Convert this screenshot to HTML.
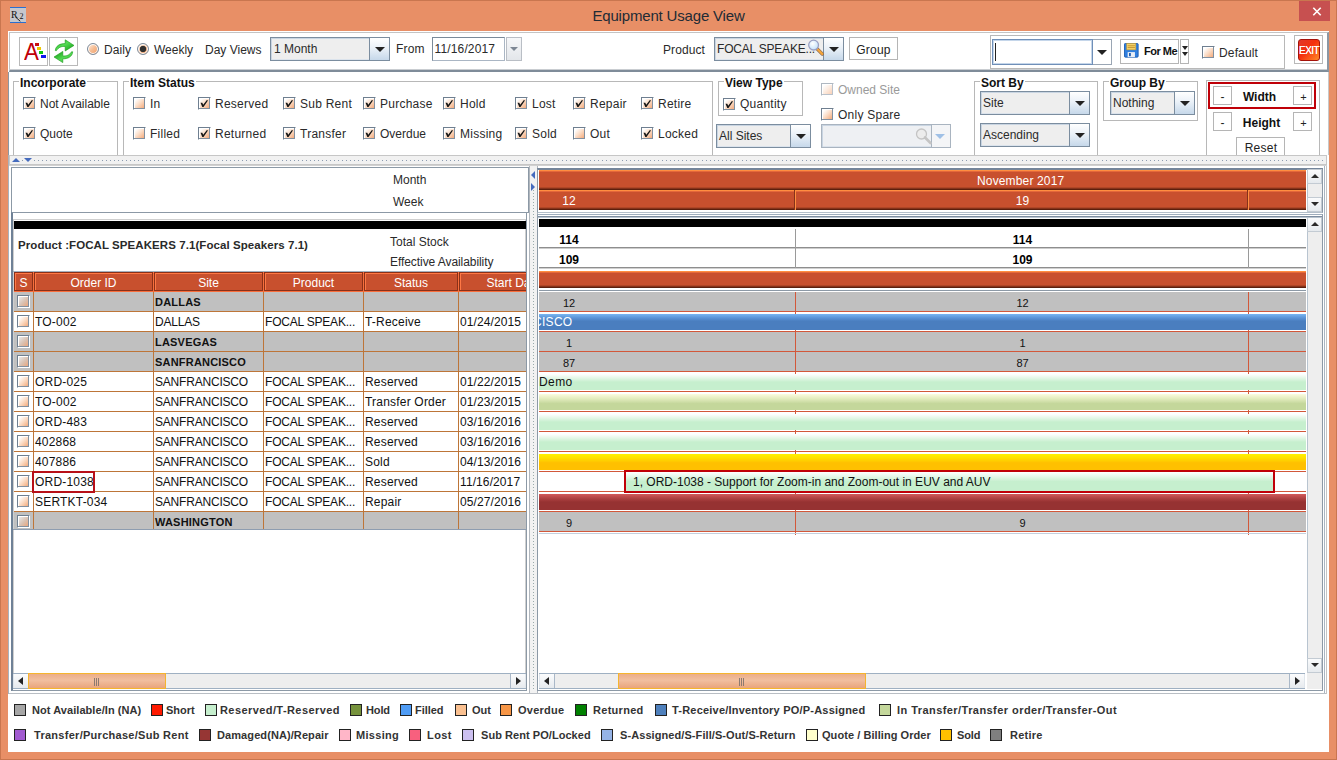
<!DOCTYPE html>
<html>
<head>
<meta charset="utf-8">
<title>Equipment Usage View</title>
<style>
html,body{margin:0;padding:0;}
body{width:1337px;height:760px;overflow:hidden;background:#E88F66;position:relative;font-family:"Liberation Sans",Arial,sans-serif;font-size:12px;color:#222;}
.a{position:absolute;box-sizing:border-box;}
.t{position:absolute;white-space:nowrap;line-height:14px;font-size:12px;color:#2a2a2a;}
.b{font-weight:bold;color:#111;}
.w{background:#fff;}
/* checkbox */
.cb{position:absolute;box-sizing:border-box;width:13px;height:13px;border:1px solid;border-color:#6f7f90 #fff #fff #6f7f90;background:linear-gradient(135deg,#ffffff 15%,#fbdcc6 50%,#f2a06c 100%);box-shadow:inset -1px -1px 0 #8190a0,inset 1px 1px 0 #fff;}
.cb.on::after{content:"";position:absolute;left:2px;top:1px;width:8px;height:8px;}
.cb svg{position:absolute;left:0;top:0;}
/* combo */
.combo{position:absolute;box-sizing:border-box;border:1px solid #7b8d9f;background:#eeeeee;box-shadow:inset 1px 1px 0 #c9d5e2,inset -1px -1px 0 #dbe3ec;}
.combo .ar{position:absolute;right:0;top:0;bottom:0;width:18px;background:linear-gradient(#ffffff 0%,#eaf1f8 45%,#c6d8ea 100%);border-left:1px solid #7b8d9f;}
.combo .ar::after{content:"";position:absolute;left:50%;margin-left:-5px;top:50%;margin-top:-2px;border-left:5px solid transparent;border-right:5px solid transparent;border-top:5px solid #222;}
.grp{position:absolute;box-sizing:border-box;border:1px solid #b8b8b8;}
.grp>span{position:absolute;top:-6px;left:5px;background:#fff;padding:0 1px;font-weight:bold;font-size:12px;line-height:14px;color:#111;white-space:nowrap;}
.btn{position:absolute;box-sizing:border-box;border:1px solid #b5b5b5;background:#fff;text-align:center;font-size:12px;line-height:14px;color:#222;}

.hd{background:#c8502e;color:#fff;text-align:center;font-size:12px;line-height:14px;padding-top:3px;border:1px solid #8a3018;white-space:nowrap;overflow:hidden;box-shadow:inset 1px 1px 0 #ff7845;}
.row{left:0;width:560px;height:20px;background:#fff;border-bottom:1px solid #bd7538;}
.row.g{background:#c0c0c0;}
.row .c{position:absolute;top:0;height:19px;box-sizing:border-box;margin-left:-1px;border-left:1px solid #bd7538;padding:3px 0 0 1px;font-size:12px;line-height:14px;color:#111;white-space:nowrap;overflow:hidden;}
.row .u{letter-spacing:-0.2px;}
.row .o{letter-spacing:0.2px;}
.row .d{letter-spacing:0.1px;}
.row .gb{font-weight:bold;font-size:11px;letter-spacing:0.2px;}
.ob{background:linear-gradient(#ff8e40 0,#ff8e40 1px,#e4683a 1px,#e4683a 2px,#c8502e 2px,#c8502e calc(100% - 3px),#b04626 calc(100% - 3px),#b04626 calc(100% - 2px),#86321a calc(100% - 2px),#86321a calc(100% - 1px),#5c200e calc(100% - 1px),#5c200e 100%);border-left:1px solid #ff8e40;border-right:1px solid #86321a;}
.lg{font-weight:bold;font-size:11px;color:#333;}
</style>
</head>
<body>
<!-- window chrome -->
<div class="a" style="left:0;top:0;width:1337px;height:760px;border:1px solid #c9764f;"></div>
<div class="t" style="left:0;width:1337px;top:7px;text-align:center;font-size:15px;line-height:18px;color:#222b35;letter-spacing:-0.17px;">Equipment Usage View</div>
<div class="a" id="appicon" style="left:10px;top:7px;width:16px;height:16px;background:#c6c7cc;border-top:1px solid #2a6fd0;border-bottom:1px solid #2a6fd0;"><span class="t" style="left:1px;top:2px;font-family:'Liberation Serif',serif;font-size:10px;line-height:10px;color:#111;">R</span><span class="t" style="left:9.500px;top:4px;font-family:'Liberation Serif',serif;font-size:8px;line-height:9px;color:#111;">2</span><svg class="a" style="left:0;top:0" width="16" height="14"><path d="M5.500 9 L10.300 13.300" stroke="#111" stroke-width="0.900" fill="none"/></svg></div>
<div class="a" style="left:1299px;top:1px;width:31px;height:20px;background:#C75050;"></div>
<svg class="a" style="left:1311px;top:5px" width="13" height="13"><path d="M2.300 2.800 L9.700 10.200 M9.700 2.800 L2.300 10.200" stroke="#fff" stroke-width="1.600" fill="none"/></svg>

<!-- toolbar panel -->
<div class="a w" id="toolbar" style="left:8px;top:31px;width:1321px;height:41px;"></div><div class="a" style="left:9px;top:32px;width:1320px;height:40px;border:1px solid #c4c4c4;border-bottom:2px solid #7f8c99;border-right:2px solid #8b97a3;"></div><div class="a" style="left:9px;top:69px;width:1318px;height:1px;background:#c9cdd1"></div>

<div class="btn" style="left:19px;top:37px;width:29px;height:29px;border-color:#b9b9b9"></div>
<div class="btn" style="left:49px;top:37px;width:29px;height:29px;border-color:#b9b9b9"></div>
<div class="t" style="left:23px;top:39px;font-size:24px;line-height:26px;color:#c00008;transform:scaleX(.93);transform-origin:100% 50%">A</div>
<div class="a" style="left:35px;top:43px;width:4px;height:3px;background:#c80f0f"></div>
<div class="a" style="left:37px;top:47px;width:4px;height:3px;background:#f0c800"></div>
<div class="a" style="left:39px;top:51px;width:4px;height:3px;background:#10c810"></div>
<div class="a" style="left:41px;top:55px;width:5px;height:3px;background:#0a14f0"></div>
<svg class="a" style="left:49px;top:37px" width="29" height="29" viewBox="0 0 29 29"><defs><linearGradient id="gr1" x1="0" y1="0" x2="1" y2="1"><stop offset="0" stop-color="#1da51d"/><stop offset="0.450" stop-color="#55dc55"/><stop offset="1" stop-color="#0d960d"/></linearGradient></defs><path d="M16.200 2.800 L25 8.400 L16.200 14 L16.200 9.500 C12.500 9.200 9.500 10.200 7.500 13.600 L6.300 13.600 C6.600 9.200 10.500 6.400 16.200 6.600 Z" fill="url(#gr1)" stroke="#189818" stroke-width="0.600" stroke-linejoin="round"/><path d="M16.200 2.800 L25 8.400 L16.200 14 L16.200 9.500 C12.500 9.200 9.500 10.200 7.500 13.600 L6.300 13.600 C6.600 9.200 10.500 6.400 16.200 6.600 Z" fill="url(#gr1)" stroke="#189818" stroke-width="0.600" stroke-linejoin="round" transform="rotate(180 15 14.200)"/></svg>
<div class="a" style="left:87px;top:43px;width:12px;height:12px;border-radius:50%;border:1px solid #7c8b9b;box-shadow:inset 0 0 0 1px #fff;background:linear-gradient(135deg,#fde6d4 10%,#f6bd94 50%,#ee9c64 100%)"></div>
<div class="t " style="left:104px;top:43px;letter-spacing:0.1px">Daily</div>
<div class="a" style="left:137px;top:43px;width:12px;height:12px;border-radius:50%;border:1px solid #7c8b9b;box-shadow:inset 0 0 0 1px #fff;background:radial-gradient(circle at 50% 50%,#303030 0 2.800px,rgba(48,48,48,0) 3.600px),linear-gradient(135deg,#fde6d4 10%,#f6bd94 50%,#ee9c64 100%)"></div>
<div class="t " style="left:154px;top:43px;">Weekly</div>
<div class="t " style="left:205px;top:43px;">Day Views</div>
<div class="combo" style="left:270px;top:37px;width:120px;height:24px;"><div class="t" style="left:3px;top:4px;">1 Month</div><div class="ar" style="width:19px"></div></div>
<div class="t " style="left:396px;top:42px;letter-spacing:0.2px">From</div>
<div class="a w" style="left:432px;top:37px;width:73px;height:24px;border:1px solid #7a8a99;border-right-color:#aab6c4;border-bottom-color:#aab6c4"></div>
<div class="t " style="left:434.500px;top:42px;letter-spacing:0.15px">11/16/2017</div>
<div class="a" style="left:506px;top:37px;width:16px;height:24px;border:1px solid #b9bec5;background:linear-gradient(#f6f7f9,#e3e6ea)"></div>
<div class="a" style="left:510px;top:47px;width:0;height:0;border-left:4px solid transparent;border-right:4px solid transparent;border-top:4px solid #7d8794"></div>
<div class="t " style="left:663px;top:43px;letter-spacing:0.1px">Product</div>
<div class="combo" style="left:714px;top:37px;width:130px;height:24px;"><div class="t" style="left:2px;top:4px;letter-spacing:-0.2px">FOCAL SPEAKE...</div><div class="ar" style="width:19px"></div></div>
<svg class="a" style="left:806px;top:38px" width="20" height="20" viewBox="0 0 20 20"><defs><radialGradient id="lens" cx="0.4" cy="0.35" r="0.7"><stop offset="0" stop-color="#ffffff"/><stop offset="1" stop-color="#bfe0fb"/></radialGradient></defs><path d="M11.300 11 L16.300 16" stroke="#8a6a50" stroke-width="3.400" stroke-linecap="round"/><path d="M11.600 11.300 L16.200 15.900" stroke="#f5a53a" stroke-width="2.200" stroke-linecap="round"/><circle cx="7.600" cy="7.100" r="4.900" fill="url(#lens)" stroke="#9aa0c4" stroke-width="1.300"/></svg>
<div class="btn" style="left:849px;top:37px;width:49px;height:23px;padding-top:5px;letter-spacing:0.2px">Group</div>
<div class="a" style="left:990px;top:35px;width:295px;height:34px;border:1px solid #b8b8b8"></div>
<div class="a w" style="left:992px;top:39px;width:120px;height:26px;border:1px solid #9aa6b4"></div>
<div class="a w" style="left:992px;top:39px;width:101px;height:26px;border:1px solid #6f8fb8;box-shadow:inset 0 0 0 1px #c5d6ea"></div>
<div class="a" style="left:995px;top:43px;width:1px;height:18px;background:#222"></div>
<div class="a" style="left:1097px;top:50px;width:0;height:0;border-left:5px solid transparent;border-right:5px solid transparent;border-top:5px solid #222"></div>
<div class="btn" style="left:1120px;top:39px;width:59px;height:25px"></div>
<div class="btn" style="left:1180px;top:39px;width:9px;height:25px"></div>
<svg class="a" style="left:1124px;top:43px" width="15.500" height="15.500" viewBox="0 0 17 17"><rect x="0.500" y="0.500" width="15" height="15" rx="1" fill="#2f7fe0" stroke="#1c5bb0"/><rect x="3" y="0.500" width="10" height="7" fill="#f6d36a" stroke="#c79a2a" stroke-width="0.600"/><path d="M4 3 H12 M4 5 H12" stroke="#b8861f" stroke-width="0.800"/><rect x="4" y="10" width="8" height="5.500" fill="#e9eef5"/><rect x="5.500" y="11" width="2" height="3.500" fill="#1c5bb0"/></svg>
<div class="t b" style="left:1144px;top:44px;font-size:11px;letter-spacing:-0.5px">For Me</div>
<div class="a" style="left:1181.500px;top:46px;width:0;height:0;border-left:3px solid transparent;border-right:3px solid transparent;border-top:4px solid #222"></div>
<div class="a" style="left:1181.500px;top:52px;width:0;height:0;border-left:3px solid transparent;border-right:3px solid transparent;border-top:4px solid #222"></div>
<div class="cb" style="left:1202px;top:46px"></div>
<div class="t " style="left:1219px;top:46px;letter-spacing:0.15px">Default</div>
<div class="btn" style="left:1294px;top:35px;width:29px;height:29px;border-color:#b9b9b9"></div>
<div class="a" style="left:1298px;top:39px;width:22px;height:22px;border-radius:3px;border:1px solid #a5120a;background:linear-gradient(135deg,#e0382a 0%,#f4300c 45%,#ff8a2a 100%)"></div>
<div class="t " style="left:1299px;top:45px;font-size:10px;line-height:12px;color:#fff;width:20px;text-align:center;letter-spacing:-0.6px;text-shadow:0 0 0.5px #fff">EXIT</div>
<!-- options panel -->
<div class="a w" id="options" style="left:8px;top:72px;width:1321px;height:84px;border-left:1px solid #8b97a3;border-right:1px solid #c8c8c8;"></div>

<div class="a" style="left:9px;top:73px;width:1319px;height:82px;overflow:hidden"><div class="a" style="left:-9px;top:-73px;width:1337px;height:200px">
<div class="grp" style="left:13px;top:81px;width:105px;height:80px"><span>Incorporate</span></div>
<div class="cb" style="left:23px;top:97px"><svg width="10" height="10" viewBox="0 0 10 10"><path d="M1.500 4.800 L3.300 4.800 L4.200 6.800 L7.900 2 L9 2.600 L4.500 9 L3.300 9 Z" fill="#161616"/></svg></div>
<div class="t " style="left:40px;top:97px;">Not Available</div>
<div class="cb" style="left:23px;top:127px"><svg width="10" height="10" viewBox="0 0 10 10"><path d="M1.500 4.800 L3.300 4.800 L4.200 6.800 L7.900 2 L9 2.600 L4.500 9 L3.300 9 Z" fill="#161616"/></svg></div>
<div class="t " style="left:40px;top:127px;">Quote</div>
<div class="grp" style="left:123px;top:81px;width:590px;height:80px"><span>Item Status</span></div>
<div class="cb" style="left:133px;top:97px"></div>
<div class="t " style="left:150px;top:97px;letter-spacing:0.25px">In</div>
<div class="cb" style="left:133px;top:127px"></div>
<div class="t " style="left:150px;top:127px;letter-spacing:0.25px">Filled</div>
<div class="cb" style="left:198px;top:97px"><svg width="10" height="10" viewBox="0 0 10 10"><path d="M1.500 4.800 L3.300 4.800 L4.200 6.800 L7.900 2 L9 2.600 L4.500 9 L3.300 9 Z" fill="#161616"/></svg></div>
<div class="t " style="left:215px;top:97px;letter-spacing:0.25px">Reserved</div>
<div class="cb" style="left:198px;top:127px"><svg width="10" height="10" viewBox="0 0 10 10"><path d="M1.500 4.800 L3.300 4.800 L4.200 6.800 L7.900 2 L9 2.600 L4.500 9 L3.300 9 Z" fill="#161616"/></svg></div>
<div class="t " style="left:215px;top:127px;letter-spacing:0.25px">Returned</div>
<div class="cb" style="left:283px;top:97px"><svg width="10" height="10" viewBox="0 0 10 10"><path d="M1.500 4.800 L3.300 4.800 L4.200 6.800 L7.900 2 L9 2.600 L4.500 9 L3.300 9 Z" fill="#161616"/></svg></div>
<div class="t " style="left:300px;top:97px;letter-spacing:0.25px">Sub Rent</div>
<div class="cb" style="left:283px;top:127px"><svg width="10" height="10" viewBox="0 0 10 10"><path d="M1.500 4.800 L3.300 4.800 L4.200 6.800 L7.900 2 L9 2.600 L4.500 9 L3.300 9 Z" fill="#161616"/></svg></div>
<div class="t " style="left:300px;top:127px;letter-spacing:0.25px">Transfer</div>
<div class="cb" style="left:363px;top:97px"><svg width="10" height="10" viewBox="0 0 10 10"><path d="M1.500 4.800 L3.300 4.800 L4.200 6.800 L7.900 2 L9 2.600 L4.500 9 L3.300 9 Z" fill="#161616"/></svg></div>
<div class="t " style="left:380px;top:97px;letter-spacing:0.25px">Purchase</div>
<div class="cb" style="left:363px;top:127px"><svg width="10" height="10" viewBox="0 0 10 10"><path d="M1.500 4.800 L3.300 4.800 L4.200 6.800 L7.900 2 L9 2.600 L4.500 9 L3.300 9 Z" fill="#161616"/></svg></div>
<div class="t " style="left:380px;top:127px;">Overdue</div>
<div class="cb" style="left:443px;top:97px"><svg width="10" height="10" viewBox="0 0 10 10"><path d="M1.500 4.800 L3.300 4.800 L4.200 6.800 L7.900 2 L9 2.600 L4.500 9 L3.300 9 Z" fill="#161616"/></svg></div>
<div class="t " style="left:460px;top:97px;letter-spacing:0.25px">Hold</div>
<div class="cb" style="left:443px;top:127px"><svg width="10" height="10" viewBox="0 0 10 10"><path d="M1.500 4.800 L3.300 4.800 L4.200 6.800 L7.900 2 L9 2.600 L4.500 9 L3.300 9 Z" fill="#161616"/></svg></div>
<div class="t " style="left:460px;top:127px;letter-spacing:0.25px">Missing</div>
<div class="cb" style="left:515px;top:97px"><svg width="10" height="10" viewBox="0 0 10 10"><path d="M1.500 4.800 L3.300 4.800 L4.200 6.800 L7.900 2 L9 2.600 L4.500 9 L3.300 9 Z" fill="#161616"/></svg></div>
<div class="t " style="left:532px;top:97px;letter-spacing:0.25px">Lost</div>
<div class="cb" style="left:515px;top:127px"><svg width="10" height="10" viewBox="0 0 10 10"><path d="M1.500 4.800 L3.300 4.800 L4.200 6.800 L7.900 2 L9 2.600 L4.500 9 L3.300 9 Z" fill="#161616"/></svg></div>
<div class="t " style="left:532px;top:127px;letter-spacing:0.25px">Sold</div>
<div class="cb" style="left:573px;top:97px"><svg width="10" height="10" viewBox="0 0 10 10"><path d="M1.500 4.800 L3.300 4.800 L4.200 6.800 L7.900 2 L9 2.600 L4.500 9 L3.300 9 Z" fill="#161616"/></svg></div>
<div class="t " style="left:590px;top:97px;letter-spacing:0.25px">Repair</div>
<div class="cb" style="left:573px;top:127px"></div>
<div class="t " style="left:590px;top:127px;letter-spacing:0.25px">Out</div>
<div class="cb" style="left:641px;top:97px"><svg width="10" height="10" viewBox="0 0 10 10"><path d="M1.500 4.800 L3.300 4.800 L4.200 6.800 L7.900 2 L9 2.600 L4.500 9 L3.300 9 Z" fill="#161616"/></svg></div>
<div class="t " style="left:658px;top:97px;letter-spacing:0.25px">Retire</div>
<div class="cb" style="left:641px;top:127px"><svg width="10" height="10" viewBox="0 0 10 10"><path d="M1.500 4.800 L3.300 4.800 L4.200 6.800 L7.900 2 L9 2.600 L4.500 9 L3.300 9 Z" fill="#161616"/></svg></div>
<div class="t " style="left:658px;top:127px;letter-spacing:0.25px">Locked</div>
<div class="grp" style="left:718px;top:81px;width:85px;height:35px"><span>View Type</span></div>
<div class="cb" style="left:723px;top:98px"><svg width="10" height="10" viewBox="0 0 10 10"><path d="M1.500 4.800 L3.300 4.800 L4.200 6.800 L7.900 2 L9 2.600 L4.500 9 L3.300 9 Z" fill="#161616"/></svg></div>
<div class="t " style="left:740px;top:97px;letter-spacing:0.25px">Quantity</div>
<div class="combo" style="left:716px;top:124px;width:95px;height:24px;"><div class="t" style="left:2px;top:4px;">All Sites</div><div class="ar" style="width:19px"></div></div>
<div class="cb" style="left:821px;top:83px;opacity:.55"></div>
<div class="t " style="left:838px;top:83px;color:#9a9a9a">Owned Site</div>
<div class="cb" style="left:821px;top:108px"></div>
<div class="t " style="left:838px;top:108px;letter-spacing:0.25px">Only Spare</div>
<div class="combo" style="left:821px;top:124px;width:130px;height:24px;border-color:#a9b4c0;background:#eef0f3"><div class="a" style="right:0;top:0;bottom:0;width:19px;border-left:1px solid #a9b4c0;background:#f4f5f7"></div><div class="a" style="right:5px;top:9px;width:0;height:0;border-left:5px solid transparent;border-right:5px solid transparent;border-top:5px solid #9fc0e6"></div></div>
<svg class="a" style="left:914px;top:127px" width="20" height="20" viewBox="0 0 20 20"><circle cx="7.500" cy="7" r="5" fill="#ececec" stroke="#c4c4c4" stroke-width="1.3"/><path d="M11 10.500 L16.500 16" stroke="#c4c4c4" stroke-width="2.6" stroke-linecap="round"/></svg>
<div class="grp" style="left:974px;top:81px;width:124px;height:80px"><span>Sort By</span></div>
<div class="combo" style="left:980px;top:91px;width:110px;height:24px;"><div class="t" style="left:2px;top:4px;">Site</div><div class="ar" style="width:19px"></div></div>
<div class="combo" style="left:980px;top:123px;width:110px;height:24px;"><div class="t" style="left:2px;top:4px;">Ascending</div><div class="ar" style="width:19px"></div></div>
<div class="grp" style="left:1103px;top:81px;width:95px;height:40px"><span>Group By</span></div>
<div class="combo" style="left:1110px;top:91px;width:85px;height:24px;"><div class="t" style="left:2px;top:4px;">Nothing</div><div class="ar" style="width:19px"></div></div>
<div class="a" style="left:1206px;top:80px;width:114px;height:80px;border:1px solid #b8b8b8"></div>
<div class="a" style="left:1208px;top:82px;width:108px;height:27px;border:2px solid #bf0008"></div>
<div class="btn" style="left:1213px;top:86px;width:19px;height:19px;padding-top:3px">-</div>
<div class="btn" style="left:1293px;top:86px;width:19px;height:19px;padding-top:3px;padding-left:2px;font-size:11px">+</div>
<div class="t b" style="left:1229.500px;top:90px;width:60px;text-align:center">Width</div>
<div class="btn" style="left:1213px;top:112px;width:19px;height:19px;padding-top:3px">-</div>
<div class="btn" style="left:1293px;top:112px;width:19px;height:19px;padding-top:3px;padding-left:2px;font-size:11px">+</div>
<div class="t b" style="left:1231.500px;top:116px;width:60px;text-align:center">Height</div>
<div class="btn" style="left:1236px;top:137px;width:49px;height:22px;padding-top:3px;padding-left:1px;letter-spacing:0.25px">Reset</div>
</div></div>
<!-- splitter -->
<div class="a w" style="left:8px;top:155px;width:1321px;height:12px;border-left:1px solid #a9b2bc"></div><div class="a" id="split" style="left:9px;top:155px;width:1318px;height:10px;background:#f1f1f1;border:1px solid #c6c6c6;"></div>

<!-- main panel -->
<div class="a w" id="main" style="left:8px;top:165px;width:1321px;height:532px;border-left:1px solid #a9b2bc;"></div>

<div class="a" style="left:22px;top:160px;width:1303px;height:1px;background:repeating-linear-gradient(90deg,#8b9bb0 0 1px,transparent 1px 4px)"></div>

<div class="a" style="left:12px;top:158px;width:0;height:0;border-left:4px solid transparent;border-right:4px solid transparent;border-bottom:4px solid #456bbd"></div>
<div class="a" style="left:24px;top:158px;width:8px;height:5px;background:#f1f1f1"></div><div class="a" style="left:24px;top:158px;width:0;height:0;border-left:4px solid transparent;border-right:4px solid transparent;border-top:4px solid #456bbd"></div>
<div class="a w" style="left:11px;top:167px;width:518px;height:46px;border:1px solid #8c99a6;"></div>
<div class="t " style="left:393px;top:173px;">Month</div>
<div class="t " style="left:393px;top:195px;">Week</div>
<div class="a w" style="left:11px;top:212px;width:516px;height:479px;border:1px solid #8c99a6;border-left:2px solid #6f8196"></div><div class="a" style="left:13px;top:219px;width:513px;height:455px;border:1px solid #cfcfcf;border-bottom:none"></div>
<div class="a" style="left:14px;top:221px;width:512px;height:8px;background:#000"></div>
<div class="t b" style="left:18px;top:238px;font-size:11.5px;color:#2a2a2a;letter-spacing:0.07px">Product :FOCAL SPEAKERS 7.1(Focal Speakers 7.1)</div>
<div class="t " style="left:390px;top:235px;">Total Stock</div>
<div class="t " style="left:390px;top:255px;letter-spacing:-0.07px">Effective Availability</div>
<div class="a" style="left:13px;top:271px;width:513px;height:1px;background:#a3b0bf"></div><div class="a" id="ltab" style="left:14px;top:272px;width:512px;height:257px;overflow:hidden"><div class="a" style="left:0;top:0;width:512px;height:20px;background:#f86e3c"></div>
<div class="a hd" style="left:0px;top:0;width:19px;height:19px">S</div>
<div class="a hd" style="left:20px;top:0;width:119px;height:19px">Order ID</div>
<div class="a hd" style="left:140px;top:0;width:109px;height:19px">Site</div>
<div class="a hd" style="left:250px;top:0;width:99px;height:19px">Product</div>
<div class="a hd" style="left:350px;top:0;width:94px;height:19px">Status</div>
<div class="a hd" style="left:445px;top:0;width:109px;height:19px">Start Date</div>
<div class="a row g" style="top:20px">
<div class="cb" style="left:3px;top:3px;background:linear-gradient(135deg,#e8e8e8 10%,#d9c0b0 55%,#f0a070 100%);"></div>
<div class="c gb" style="left:20px;width:120px"></div>
<div class="c gb" style="left:140px;width:110px">DALLAS</div>
<div class="c gb" style="left:250px;width:100px"></div>
<div class="c gb" style="left:350px;width:95px"></div>
<div class="c gb" style="left:445px;width:110px"></div>
</div>
<div class="a row" style="top:40px">
<div class="cb" style="left:3px;top:3px;"></div>
<div class="c o" style="left:20px;width:120px">TO-002</div>
<div class="c u" style="left:140px;width:110px">DALLAS</div>
<div class="c u" style="left:250px;width:100px">FOCAL SPEAK...</div>
<div class="c o" style="left:350px;width:95px">T-Receive</div>
<div class="c d" style="left:445px;width:110px">01/24/2015</div>
</div>
<div class="a row g" style="top:60px">
<div class="cb" style="left:3px;top:3px;background:linear-gradient(135deg,#e8e8e8 10%,#d9c0b0 55%,#f0a070 100%);"></div>
<div class="c gb" style="left:20px;width:120px"></div>
<div class="c gb" style="left:140px;width:110px">LASVEGAS</div>
<div class="c gb" style="left:250px;width:100px"></div>
<div class="c gb" style="left:350px;width:95px"></div>
<div class="c gb" style="left:445px;width:110px"></div>
</div>
<div class="a row g" style="top:80px">
<div class="cb" style="left:3px;top:3px;background:linear-gradient(135deg,#e8e8e8 10%,#d9c0b0 55%,#f0a070 100%);"></div>
<div class="c gb" style="left:20px;width:120px"></div>
<div class="c gb" style="left:140px;width:110px">SANFRANCISCO</div>
<div class="c gb" style="left:250px;width:100px"></div>
<div class="c gb" style="left:350px;width:95px"></div>
<div class="c gb" style="left:445px;width:110px"></div>
</div>
<div class="a row" style="top:100px">
<div class="cb" style="left:3px;top:3px;"></div>
<div class="c o" style="left:20px;width:120px">ORD-025</div>
<div class="c u" style="left:140px;width:110px">SANFRANCISCO</div>
<div class="c u" style="left:250px;width:100px">FOCAL SPEAK...</div>
<div class="c o" style="left:350px;width:95px">Reserved</div>
<div class="c d" style="left:445px;width:110px">01/22/2015</div>
</div>
<div class="a row" style="top:120px">
<div class="cb" style="left:3px;top:3px;"></div>
<div class="c o" style="left:20px;width:120px">TO-002</div>
<div class="c u" style="left:140px;width:110px">SANFRANCISCO</div>
<div class="c u" style="left:250px;width:100px">FOCAL SPEAK...</div>
<div class="c o" style="left:350px;width:95px">Transfer Order</div>
<div class="c d" style="left:445px;width:110px">01/23/2015</div>
</div>
<div class="a row" style="top:140px">
<div class="cb" style="left:3px;top:3px;"></div>
<div class="c o" style="left:20px;width:120px">ORD-483</div>
<div class="c u" style="left:140px;width:110px">SANFRANCISCO</div>
<div class="c u" style="left:250px;width:100px">FOCAL SPEAK...</div>
<div class="c o" style="left:350px;width:95px">Reserved</div>
<div class="c d" style="left:445px;width:110px">03/16/2016</div>
</div>
<div class="a row" style="top:160px">
<div class="cb" style="left:3px;top:3px;"></div>
<div class="c o" style="left:20px;width:120px">402868</div>
<div class="c u" style="left:140px;width:110px">SANFRANCISCO</div>
<div class="c u" style="left:250px;width:100px">FOCAL SPEAK...</div>
<div class="c o" style="left:350px;width:95px">Reserved</div>
<div class="c d" style="left:445px;width:110px">03/16/2016</div>
</div>
<div class="a row" style="top:180px">
<div class="cb" style="left:3px;top:3px;"></div>
<div class="c o" style="left:20px;width:120px">407886</div>
<div class="c u" style="left:140px;width:110px">SANFRANCISCO</div>
<div class="c u" style="left:250px;width:100px">FOCAL SPEAK...</div>
<div class="c o" style="left:350px;width:95px">Sold</div>
<div class="c d" style="left:445px;width:110px">04/13/2016</div>
</div>
<div class="a row" style="top:200px">
<div class="cb" style="left:3px;top:3px;"></div>
<div class="c o" style="left:20px;width:120px">ORD-1038</div>
<div class="c u" style="left:140px;width:110px">SANFRANCISCO</div>
<div class="c u" style="left:250px;width:100px">FOCAL SPEAK...</div>
<div class="c o" style="left:350px;width:95px">Reserved</div>
<div class="c d" style="left:445px;width:110px">11/16/2017</div>
</div>
<div class="a row" style="top:220px">
<div class="cb" style="left:3px;top:3px;"></div>
<div class="c o" style="left:20px;width:120px">SERTKT-034</div>
<div class="c u" style="left:140px;width:110px">SANFRANCISCO</div>
<div class="c u" style="left:250px;width:100px">FOCAL SPEAK...</div>
<div class="c o" style="left:350px;width:95px">Repair</div>
<div class="c d" style="left:445px;width:110px">05/27/2016</div>
</div>
<div class="a row g" style="top:240px">
<div class="cb" style="left:3px;top:3px;background:linear-gradient(135deg,#e8e8e8 10%,#d9c0b0 55%,#f0a070 100%);"></div>
<div class="c gb" style="left:20px;width:120px"></div>
<div class="c gb" style="left:140px;width:110px">WASHINGTON</div>
<div class="c gb" style="left:250px;width:100px"></div>
<div class="c gb" style="left:350px;width:95px"></div>
<div class="c gb" style="left:445px;width:110px"></div>
</div>
</div>
<div class="a" style="left:32px;top:471px;width:63px;height:22px;border:2px solid #b81018"></div>
<div class="a" style="left:13px;top:673px;width:513px;height:16px;background:#eeeeee;border-top:1px solid #9fb0c2;border-bottom:1px solid #9fb0c2"></div><div class="a" style="left:13px;top:674px;width:16px;height:14px;background:linear-gradient(#fbfcfd,#e6eaee);border-right:1px solid #aab8c8;border-left:1px solid #dfe5eb"></div><div class="a" style="left:18px;top:677px;width:0;height:0;border-top:4px solid transparent;border-bottom:4px solid transparent;border-right:5px solid #222"></div><div class="a" style="left:510px;top:674px;width:16px;height:14px;background:linear-gradient(#fbfcfd,#e6eaee);border-left:1px solid #aab8c8;border-right:1px solid #dfe5eb"></div><div class="a" style="left:516px;top:677px;width:0;height:0;border-top:4px solid transparent;border-bottom:4px solid transparent;border-left:5px solid #222"></div><div class="a" style="left:28px;top:673px;width:138px;height:16px;border:1px solid #f5b52e;background:linear-gradient(#ecae88,#f1bf9f 45%,#e9a57c)"></div><div class="a" style="left:94px;top:678px;width:6px;height:8px;background:repeating-linear-gradient(90deg,#8c7a70 0 1px,transparent 1px 2px)"></div>
<div class="a" style="left:529px;top:166px;width:9px;height:527px;background:#f2f2f2;border-left:1px solid #b0b6bd;border-right:1px solid #b0b6bd"></div>
<div class="a" style="left:533px;top:190px;width:1px;height:500px;background:repeating-linear-gradient(#9aa 0 1px,transparent 1px 3px)"></div>
<div class="a" style="left:531px;top:171px;width:0;height:0;border-top:4px solid transparent;border-bottom:4px solid transparent;border-right:4px solid #456bbd"></div>
<div class="a" style="left:531px;top:183px;width:0;height:0;border-top:4px solid transparent;border-bottom:4px solid transparent;border-left:4px solid #456bbd"></div>
<div class="a w" style="left:537px;top:168px;width:786px;height:45px;border:1px solid #8c99a6;border-top:2px solid #74859a;border-bottom-color:#b4bfca"></div>
<div class="a w" style="left:537px;top:214px;width:786px;height:477px;border:1px solid #8c99a6;border-top:1px solid #9fadbc;"></div>
<div class="a" id="rtab" style="left:539px;top:169px;width:767px;height:505px;overflow:hidden"><div class="a" style="left:-1px;top:0;width:769px;height:505px">
<div class="a ob" style="left:-5px;top:1px;width:780px;height:20px;"></div>
<div class="t " style="left:439px;top:5px;color:#fff;letter-spacing:0.15px">November 2017</div>
<div class="a ob" style="left:-200px;top:21px;width:457px;height:20px;"></div>
<div class="a ob" style="left:257px;top:21px;width:453px;height:20px;"></div>
<div class="a ob" style="left:710px;top:21px;width:200px;height:20px;"></div>
<div class="t " style="left:24px;top:25px;color:#fff;width:14px;text-align:center">12</div>
<div class="t " style="left:477.500px;top:25px;color:#fff;width:14px;text-align:center">19</div>
<div class="a" style="left:0;top:50px;width:769px;height:8px;background:#000"></div>
<div class="a" style="left:0;top:78px;width:769px;height:1px;background:#8e8e8e"></div><div class="a" style="left:0;top:79px;width:769px;height:1px;background:#cdcdcd"></div>
<div class="a" style="left:0;top:98px;width:769px;height:1px;background:#8e8e8e"></div>
<div class="a" style="left:0;top:99px;width:769px;height:1px;background:#d0d0d0"></div>
<div class="a" style="left:257px;top:60px;width:1px;height:39px;background:#9a9a9a"></div>
<div class="a" style="left:710px;top:60px;width:1px;height:39px;background:#9a9a9a"></div>
<div class="t b" style="left:16px;top:64px;width:30px;text-align:center;color:#000">114</div>
<div class="t b" style="left:16px;top:84px;width:30px;text-align:center;color:#000">109</div>
<div class="t b" style="left:469.500px;top:64px;width:30px;text-align:center;color:#000">114</div>
<div class="t b" style="left:469.500px;top:84px;width:30px;text-align:center;color:#000">109</div>
<div class="a ob" style="left:-5px;top:102px;width:780px;height:17px;"></div>
<div class="a" style="left:0;top:121px;width:769px;height:1px;background:#8c99a6"></div>
<div class="a" style="left:0;top:123px;width:769px;height:19px;background:#c0c0c0"></div>
<div class="t " style="left:16px;top:127px;width:30px;text-align:center;font-size:11px;color:#111">12</div>
<div class="t " style="left:469.500px;top:127px;width:30px;text-align:center;font-size:11px;color:#111">12</div>
<div class="a" style="left:0;top:142px;width:769px;height:1px;background:#d2583a"></div>
<div class="a" style="left:0;top:162px;width:769px;height:1px;background:#d2583a"></div>
<div class="a" style="left:0;top:163px;width:769px;height:19px;background:#c0c0c0"></div>
<div class="t " style="left:16px;top:167px;width:30px;text-align:center;font-size:11px;color:#111">1</div>
<div class="t " style="left:469.500px;top:167px;width:30px;text-align:center;font-size:11px;color:#111">1</div>
<div class="a" style="left:0;top:182px;width:769px;height:1px;background:#d2583a"></div>
<div class="a" style="left:0;top:183px;width:769px;height:19px;background:#c0c0c0"></div>
<div class="t " style="left:16px;top:187px;width:30px;text-align:center;font-size:11px;color:#111">87</div>
<div class="t " style="left:469.500px;top:187px;width:30px;text-align:center;font-size:11px;color:#111">87</div>
<div class="a" style="left:0;top:202px;width:769px;height:1px;background:#d2583a"></div>
<div class="a" style="left:0;top:222px;width:769px;height:1px;background:#d2583a"></div>
<div class="a" style="left:0;top:242px;width:769px;height:1px;background:#d2583a"></div>
<div class="a" style="left:0;top:262px;width:769px;height:1px;background:#d2583a"></div>
<div class="a" style="left:0;top:282px;width:769px;height:1px;background:#d2583a"></div>
<div class="a" style="left:0;top:302px;width:769px;height:1px;background:#d2583a"></div>
<div class="a" style="left:0;top:322px;width:769px;height:1px;background:#d2583a"></div>
<div class="a" style="left:0;top:342px;width:769px;height:1px;background:#d2583a"></div>
<div class="a" style="left:0;top:343px;width:769px;height:19px;background:#c0c0c0"></div>
<div class="t " style="left:16px;top:347px;width:30px;text-align:center;font-size:11px;color:#111">9</div>
<div class="t " style="left:469.500px;top:347px;width:30px;text-align:center;font-size:11px;color:#111">9</div>
<div class="a" style="left:0;top:362px;width:769px;height:1px;background:#d2583a"></div>
<div class="a" style="left:257px;top:123px;width:1px;height:243px;background:#d2583a"></div>
<div class="a" style="left:710px;top:123px;width:1px;height:243px;background:#d2583a"></div>
<div class="a" style="left:0;top:145px;width:769px;height:16px;background:linear-gradient(#79b6f2 0%,#5a93d6 25%,#4a7ebf 45%,#4a7ebf 100%)"></div>
<div class="t " style="left:-5px;top:146px;color:#fff;letter-spacing:0.3px">CISCO</div>
<div class="a" style="left:0;top:205px;width:769px;height:16px;background:linear-gradient(#ffffff 0%,#e4f7e8 25%,#c6efce 50%,#c6efce 100%)"></div>
<div class="t " style="left:1px;top:206px;color:#111;letter-spacing:0.4px">Demo</div>
<div class="a" style="left:0;top:225px;width:769px;height:16px;background:linear-gradient(#fbfbe0 0%,#e2ebbd 30%,#c4d79b 60%,#c4d79b 100%)"></div>
<div class="a" style="left:0;top:245px;width:769px;height:16px;background:linear-gradient(#ffffff 0%,#e4f7e8 25%,#c6efce 50%,#c6efce 100%)"></div>
<div class="a" style="left:0;top:265px;width:769px;height:16px;background:linear-gradient(#ffffff 0%,#e4f7e8 25%,#c6efce 50%,#c6efce 100%)"></div>
<div class="a" style="left:0;top:285px;width:769px;height:16px;background:linear-gradient(#fff200 0%,#ffe000 25%,#ffc000 55%,#ffc000 100%)"></div>
<div class="a" style="left:0;top:325px;width:769px;height:16px;background:linear-gradient(#d25a5a 0%,#b24444 25%,#963232 50%,#963232 100%)"></div>
<div class="a" style="left:86px;top:301px;width:651px;height:23px;border:2px solid #c00008;background:linear-gradient(#ffffff 0%,#e4f7e8 25%,#c6efce 50%,#c6efce 100%)"></div>
<div class="t " style="left:95px;top:306px;color:#111">1, ORD-1038 - Support for Zoom-in and Zoom-out in EUV and AUV</div>
</div></div>
<div class="a" style="left:1307px;top:169px;width:15px;height:43px;background:#eeeeee;border-left:1px solid #b8c4d0"></div>
<div class="a" style="left:1307px;top:169px;width:15px;height:15px;background:linear-gradient(#fafbfc,#e6eaee);border:1px solid #c3cbd3"></div><div class="a" style="left:1311px;top:174px;width:0;height:0;border-left:4px solid transparent;border-right:4px solid transparent;border-bottom:4px solid #2a2a2a"></div>
<div class="a" style="left:1307px;top:197px;width:15px;height:15px;background:linear-gradient(#fafbfc,#e6eaee);border:1px solid #c3cbd3"></div><div class="a" style="left:1311px;top:202px;width:0;height:0;border-left:4px solid transparent;border-right:4px solid transparent;border-top:4px solid #2a2a2a"></div>
<div class="a" style="left:1307px;top:217px;width:15px;height:456px;background:#eeeeee;border-left:1px solid #b8c4d0"></div>
<div class="a" style="left:1307px;top:217px;width:15px;height:15px;background:linear-gradient(#fafbfc,#e6eaee);border:1px solid #c3cbd3"></div><div class="a" style="left:1311px;top:222px;width:0;height:0;border-left:4px solid transparent;border-right:4px solid transparent;border-bottom:4px solid #2a2a2a"></div>
<div class="a" style="left:1307px;top:658px;width:15px;height:15px;background:linear-gradient(#fafbfc,#e6eaee);border:1px solid #c3cbd3"></div><div class="a" style="left:1311px;top:663px;width:0;height:0;border-left:4px solid transparent;border-right:4px solid transparent;border-top:4px solid #2a2a2a"></div>
<div class="a" style="left:539px;top:673px;width:766px;height:16px;background:#eeeeee;border-top:1px solid #9fb0c2;border-bottom:1px solid #9fb0c2"></div><div class="a" style="left:539px;top:674px;width:16px;height:14px;background:linear-gradient(#fbfcfd,#e6eaee);border-right:1px solid #aab8c8;border-left:1px solid #dfe5eb"></div><div class="a" style="left:544px;top:677px;width:0;height:0;border-top:4px solid transparent;border-bottom:4px solid transparent;border-right:5px solid #222"></div><div class="a" style="left:1289px;top:674px;width:16px;height:14px;background:linear-gradient(#fbfcfd,#e6eaee);border-left:1px solid #aab8c8;border-right:1px solid #dfe5eb"></div><div class="a" style="left:1295px;top:677px;width:0;height:0;border-top:4px solid transparent;border-bottom:4px solid transparent;border-left:5px solid #222"></div><div class="a" style="left:618px;top:673px;width:248px;height:16px;border:1px solid #f5b52e;background:linear-gradient(#ecae88,#f1bf9f 45%,#e9a57c)"></div><div class="a" style="left:739px;top:678px;width:6px;height:8px;background:repeating-linear-gradient(90deg,#8c7a70 0 1px,transparent 1px 2px)"></div>
<div class="a" style="left:1307px;top:673px;width:15px;height:16px;background:#eee"></div>
<div class="a" style="left:9px;top:693px;width:1318px;height:1px;background:#b9bec4"></div>
<div class="a" style="left:1324px;top:166px;width:1px;height:527px;background:#a9b5c2"></div><div class="a" style="left:1326px;top:165px;width:1px;height:529px;background:#c4c4c4"></div><div class="a" style="left:9px;top:165px;width:1318px;height:1px;background:#d0d0d0"></div>
<div class="a" style="left:539px;top:533px;width:767px;height:1px;background:#c3d0de"></div>
<div class="a" style="left:13px;top:529px;width:513px;height:1px;background:#8e9db0"></div>
<div class="a" style="left:538px;top:216px;width:784px;height:1px;background:#7d8da0"></div><div class="a" style="left:538px;top:217px;width:784px;height:1px;background:#b9c4cf"></div>
<!-- legend -->
<div class="a w" id="legend" style="left:8px;top:694px;width:1321px;height:58px;"></div>

<div class="a" style="left:14px;top:704px;width:12px;height:12px;background:#a6a6a6;border:1px solid #222"></div>
<div class="t lg" style="left:32px;top:703px;letter-spacing:0.06px">Not Available/In (NA)</div>
<div class="a" style="left:151px;top:704px;width:12px;height:12px;background:#ff1a00;border:1px solid #222"></div>
<div class="t lg" style="left:166px;top:703px;letter-spacing:0.01px">Short</div>
<div class="a" style="left:205px;top:704px;width:12px;height:12px;background:#c6efce;border:1px solid #222"></div>
<div class="t lg" style="left:220px;top:703px;letter-spacing:0.42px">Reserved/T-Reserved</div>
<div class="a" style="left:350px;top:704px;width:12px;height:12px;background:#76923c;border:1px solid #222"></div>
<div class="t lg" style="left:366px;top:703px;letter-spacing:-0.14px">Hold</div>
<div class="a" style="left:400px;top:704px;width:12px;height:12px;background:#4f9cf5;border:1px solid #222"></div>
<div class="t lg" style="left:415px;top:703px;letter-spacing:-0.06px">Filled</div>
<div class="a" style="left:455px;top:704px;width:12px;height:12px;background:#fac090;border:1px solid #222"></div>
<div class="t lg" style="left:472px;top:703px;letter-spacing:-0.05px">Out</div>
<div class="a" style="left:500px;top:704px;width:12px;height:12px;background:#f79646;border:1px solid #222"></div>
<div class="t lg" style="left:518px;top:703px;letter-spacing:0.25px">Overdue</div>
<div class="a" style="left:575px;top:704px;width:12px;height:12px;background:#008000;border:1px solid #222"></div>
<div class="t lg" style="left:593px;top:703px;letter-spacing:0.29px">Returned</div>
<div class="a" style="left:655px;top:704px;width:12px;height:12px;background:#4f81bd;border:1px solid #222"></div>
<div class="t lg" style="left:672px;top:703px;letter-spacing:0.21px">T-Receive/Inventory PO/P-Assigned</div>
<div class="a" style="left:879px;top:704px;width:12px;height:12px;background:#c4d79b;border:1px solid #222"></div>
<div class="t lg" style="left:897px;top:703px;letter-spacing:0.44px">In Transfer/Transfer order/Transfer-Out</div>
<div class="a" style="left:14px;top:729px;width:12px;height:12px;background:#a25bd0;border:1px solid #222"></div>
<div class="t lg" style="left:34px;top:728px;letter-spacing:0.28px">Transfer/Purchase/Sub Rent</div>
<div class="a" style="left:199px;top:729px;width:12px;height:12px;background:#963634;border:1px solid #222"></div>
<div class="t lg" style="left:217px;top:728px;letter-spacing:0.09px">Damaged(NA)/Repair</div>
<div class="a" style="left:339px;top:729px;width:12px;height:12px;background:#ffb6c8;border:1px solid #222"></div>
<div class="t lg" style="left:356px;top:728px;letter-spacing:0.31px">Missing</div>
<div class="a" style="left:409px;top:729px;width:12px;height:12px;background:#f8607e;border:1px solid #222"></div>
<div class="t lg" style="left:427px;top:728px;letter-spacing:0.42px">Lost</div>
<div class="a" style="left:462px;top:729px;width:12px;height:12px;background:#ccc0f0;border:1px solid #222"></div>
<div class="t lg" style="left:481px;top:728px;letter-spacing:0.05px">Sub Rent PO/Locked</div>
<div class="a" style="left:601px;top:729px;width:12px;height:12px;background:#95b3e6;border:1px solid #222"></div>
<div class="t lg" style="left:620px;top:728px;letter-spacing:0.08px">S-Assigned/S-Fill/S-Out/S-Return</div>
<div class="a" style="left:806px;top:729px;width:12px;height:12px;background:#ffffcc;border:1px solid #222"></div>
<div class="t lg" style="left:822px;top:728px;letter-spacing:0.06px">Quote / Billing Order</div>
<div class="a" style="left:940px;top:729px;width:12px;height:12px;background:#ffc000;border:1px solid #222"></div>
<div class="t lg" style="left:957px;top:728px;letter-spacing:-0.14px">Sold</div>
<div class="a" style="left:990px;top:729px;width:12px;height:12px;background:#7f7f7f;border:1px solid #222"></div>
<div class="t lg" style="left:1010px;top:728px;letter-spacing:0.24px">Retire</div>
</body>
</html>
